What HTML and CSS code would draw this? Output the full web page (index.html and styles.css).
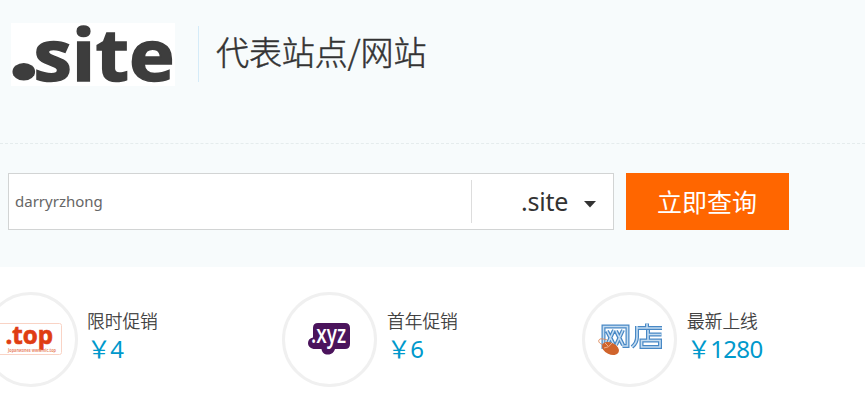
FILE: index.html
```html
<!DOCTYPE html>
<html lang="zh-CN">
<head>
<meta charset="utf-8">
<title>.site</title>
<link rel="stylesheet" href="styles.css">
</head>
<body>
<section class="hero">
  <header class="heading">
    <svg class="brand" viewBox="0 0 164 63" width="164" height="63">
      <ellipse cx="12.8" cy="48.8" rx="11.3" ry="8.800"/>
      <text class="brand-text" x="22.500" y="57.5" textLength="141" lengthAdjust="spacingAndGlyphs">site</text>
    </svg>
    <h1 class="title">代表站点/网站</h1>
  </header>
  <form class="search">
    <div class="field">
      <span class="query">darryrzhong</span>
      <div class="suffix"><span class="suffix-name">.site</span><svg class="caret" width="12" height="7" viewBox="0 0 12 7"><path d="M0 0h12L6 6.5z"/></svg></div>
    </div>
    <button class="submit" type="button">立即查询</button>
  </form>
</section>
<section class="promos">
  <article class="promo">
    <div class="circle">
      <svg width="89" height="89" viewBox="-14 295 89 89">
        <rect x="-10" y="323.5" width="71.5" height="31" rx="2" fill="none" stroke="#f9d3c5"/>
        <text class="top-text" x="5.5" y="343.5" textLength="47.5" lengthAdjust="spacingAndGlyphs">.top</text>
        <text class="top-note" x="8" y="351.5" textLength="48" lengthAdjust="spacingAndGlyphs">Jopanизnes www.nic.top</text>
      </svg>
    </div>
    <div class="info"><span class="label">限时促销</span><span class="price">￥4</span></div>
  </article>
  <article class="promo">
    <div class="circle">
      <svg width="89" height="89" viewBox="285 295 89 89">
        <path fill="#4b145c" d="M318 323h27q5 0 5 5v16q0 5-5 5h-10c-1 3-3 5.500-7 5.500s-6-2-6.500-5.500h-6.500c-4 0-7-2.500-7-6 0-3 2-5 5-5.500V328q0-5 5-5z"/>
        <text class="xyz-text" x="311" y="342.500" textLength="35" lengthAdjust="spacingAndGlyphs">.xyz</text>
      </svg>
    </div>
    <div class="info"><span class="label">首年促销</span><span class="price">￥6</span></div>
  </article>
  <article class="promo">
    <div class="circle">
      <svg width="89" height="89" viewBox="585 295 89 89">
        <defs>
          <path id="shop" d="M603.500 349v-22.500h24V346h-5M607 331l7 14M614 330l-7 15M616 331l7 14M623 330l-7 15M647 323.500v4M637 328h25M637 326v11q0 6-5 10M648 330v10M648 334.500h13.500M641.500 340.500h18.500v6.500h-18.500z"/>
        </defs>
        <g fill="none">
          <use href="#shop" stroke="#4888c5" stroke-width="4"/>
          <use href="#shop" stroke="#c4dcf1" stroke-width="1.600"/>
        </g>
        <path d="M604 345c-4-1-6-3-5-5s5-1 8 0" fill="none" stroke="#dd8a5b"/>
        <ellipse cx="610.500" cy="348.500" rx="9" ry="5.800" transform="rotate(25 610.500 348.500)" fill="#d0642c"/>
        <path d="M604 348q5 0 8-5M608 346l-3-3" fill="none" stroke="#f4c3a4" stroke-width=".8"/>
      </svg>
    </div>
    <div class="info"><span class="label">最新上线</span><span class="price">￥1280</span></div>
  </article>
</section>
</body>
</html>
```
FILE: styles.css
```css
* { box-sizing: border-box; }
body {
  margin: 0;
  background: #fff;
  color: #333;
  font-family: "Noto Sans", "Noto Sans CJK SC", sans-serif;
  overflow: hidden;
}
.hero { height: 267px; background: #f7fbfc; }
.heading {
  display: flex;
  align-items: flex-start;
  height: 144px;
  padding: 23px 0 0 11px;
  border-bottom: 1px dashed #e5eced;
}
.brand { background: #fff; fill: #3d3d3d; }
.brand-text { font: 700 71px "Open Sans", sans-serif; stroke: #3d3d3d; stroke-width: 1.5px; }
.title {
  height: 56px;
  margin: 3px 0 0 23px;
  padding-left: 17px;
  border-left: 1px solid #d5ebf8;
  font: 300 33px/51px "Noto Sans CJK SC", sans-serif;
  letter-spacing: -0.1px;
  -webkit-text-stroke: 0.5px #333;
  white-space: nowrap;
}
.search { display: flex; gap: 12px; padding: 29px 0 0 8px; }
.field {
  display: flex;
  align-items: center;
  width: 606px;
  height: 57px;
  border: 1px solid #d2d4d4;
  background: #fff;
}
.query { width: 462px; padding: 0 0 2px 6px; font-size: 15px; color: #666; }
.suffix {
  display: flex;
  align-items: center;
  height: 43px;
  padding-left: 49px;
  border-left: 1px solid #ddd;
  font-size: 25px;
}
.suffix-name { width: 63px; padding-bottom: 1px; letter-spacing: -0.2px; }
.caret { margin-top: 5px; fill: #333; }
.submit {
  width: 163px;
  height: 57px;
  padding: 0 1px 1px 0;
  border: 0;
  background: #ff6600;
  color: #fff;
  font: 400 25px/55px "Noto Sans CJK SC", sans-serif;
}
.promos {
  display: grid;
  grid-template-columns: repeat(3, 300px);
  margin: 25px 0 0 -18px;
}
.promo { display: flex; gap: 10px; }
.promo:first-child .circle { margin: 0 -1px 0 1px; }
.circle {
  width: 95px;
  height: 95px;
  border: 3px solid #f0f0f0;
  border-radius: 50%;
  overflow: hidden;
}
.circle svg { display: block; }
.info { display: flex; flex-direction: column; padding-top: 15px; }
.label {
  font: 300 17.700px/26px "Noto Sans CJK SC", sans-serif;
  -webkit-text-stroke: 0.25px #333;
}
.price {
  padding-top: 1px;
  font: 400 24px/30px "Noto Sans", "Noto Sans CJK SC", sans-serif;
  letter-spacing: -0.700px;
  color: #0099cc;
}
.top-text { font: 700 25px "Open Sans", sans-serif; fill: #df3d12; stroke: #df3d12; stroke-width: .7px; }
.top-note { font: 700 4.500px "Open Sans", sans-serif; fill: #e98a6c; }
.xyz-text { font: 600 25px "Open Sans", sans-serif; fill: #fff; }
```
